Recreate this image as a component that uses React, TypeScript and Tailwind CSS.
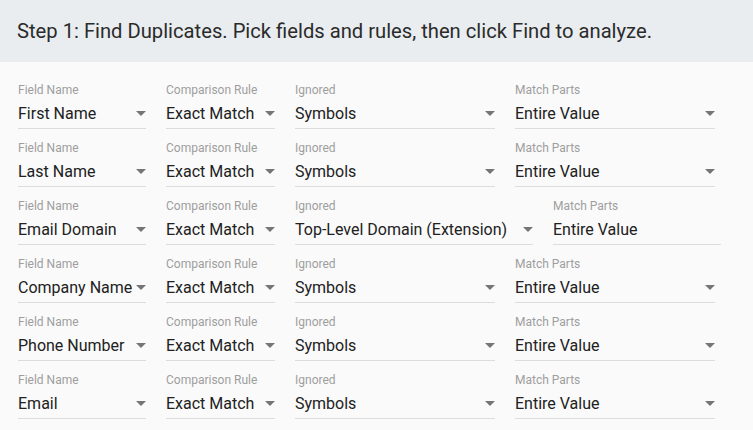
import React from "react";

type Field = { label: string; value: string; w: number; arrow?: boolean };

const Arrow = () => (
  <svg width="10" height="5" viewBox="0 0 10 5" className="shrink-0 mb-[1px]">
    <path d="M0 0 L10 0 L5 5 Z" fill="#757575" />
  </svg>
);

const Select = ({ label, value, w, arrow = true }: Field) => (
  <div className="flex flex-col shrink-0" style={{ width: w }}>
    <div className="text-[12px] leading-[14px] h-[14px] text-[#9e9e9e] whitespace-nowrap">{label}</div>
    <div className="mt-[7px] flex items-center justify-between border-b border-[#dcdcdc] pb-[5px] text-[16px] leading-[19px] text-[#212121] whitespace-nowrap">
      <span>{value}</span>
      {arrow && <Arrow />}
    </div>
  </div>
);

const rows: Field[][] = [
  ["First Name"],
  ["Last Name"],
  ["Email Domain"],
  ["Company Name"],
  ["Phone Number"],
  ["Email"],
].map((r, i) => {
  const special = i === 2;
  return [
    { label: "Field Name", value: r[0], w: 128 },
    { label: "Comparison Rule", value: "Exact Match", w: 109 },
    special
      ? { label: "Ignored", value: "Top-Level Domain (Extension)", w: 238 }
      : { label: "Ignored", value: "Symbols", w: 200 },
    special
      ? { label: "Match Parts", value: "Entire Value", w: 168, arrow: false }
      : { label: "Match Parts", value: "Entire Value", w: 200 },
  ];
});

export default function App() {
  return (
    <div className="w-[753px] h-[430px] overflow-hidden bg-[#fafafa]" style={{ fontFamily: "Roboto, 'Liberation Sans', sans-serif" }}>
      <div className="h-[62px] bg-[#e9edf0] flex items-center pl-[17px]">
        <h1 className="text-[20.2px] leading-[24px] text-[#2b2b2b] font-normal">
          Step 1: Find Duplicates. Pick fields and rules, then click Find to analyze.
        </h1>
      </div>
      <div className="pl-[18px] pt-[21px] flex flex-col gap-[12px]">
        {rows.map((r, i) => (
          <div key={i} className="flex gap-[20px]">
            {r.map((f, j) => (
              <Select key={j} {...f} />
            ))}
          </div>
        ))}
      </div>
    </div>
  );
}
